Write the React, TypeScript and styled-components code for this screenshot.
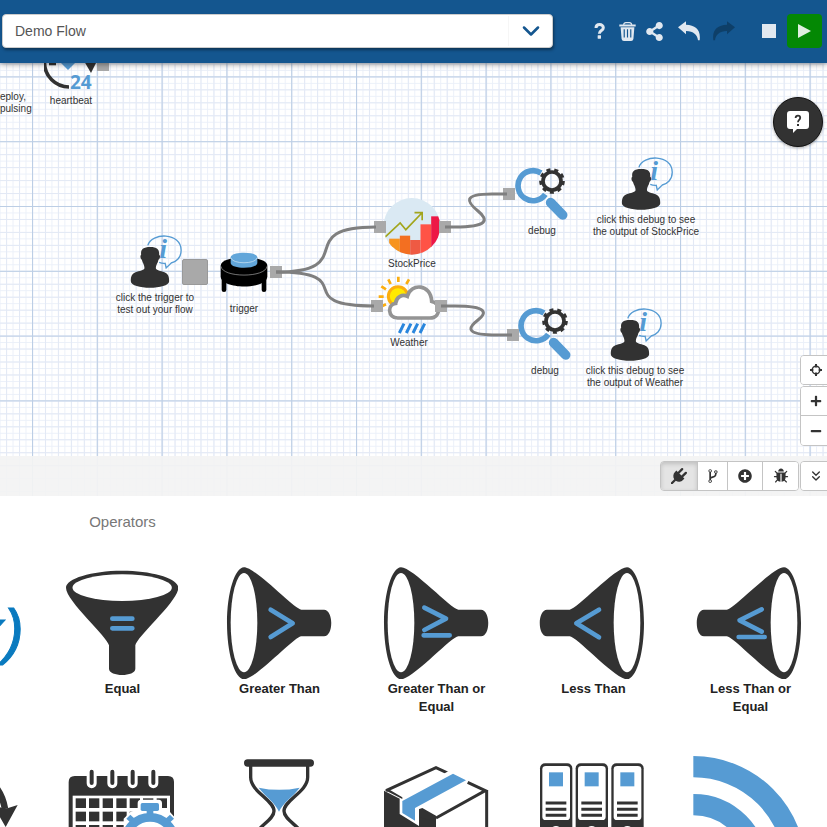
import React from "react";
import styled, { createGlobalStyle, css } from "styled-components";
import { FaShareAlt, FaPlusCircle, FaPlus, FaMinus } from "react-icons/fa";
import { ChevronDown, ChevronsDown } from "lucide-react";

const INK = "#323232";
const BLUE = "#569bd3";

const GlobalStyle = createGlobalStyle`
  * { box-sizing: border-box; }
  body {
    margin: 0;
    background: #fff;
    color: #333;
    font-family: "Liberation Sans", Arial, sans-serif;
    font-size: 14px;
  }
  button, select { font-family: inherit; }
`;

const Page = styled.div`
  display: flex;
  flex-direction: column;
  height: 100vh;
  overflow: hidden;
`;

/* ---------- header ---------- */

const Header = styled.header`
  position: relative;
  z-index: 2;
  display: flex;
  align-items: center;
  flex: none;
  padding: 14px 5px 15px 2px;
  background: #14568f;
  box-shadow: 0 1px 6px rgba(0, 0, 0, 0.45);
`;

const FlowPicker = styled.label`
  position: relative;
  display: flex;
  align-items: center;
  flex: 1;
  margin-right: 33px;
`;

const FlowSelect = styled.select`
  appearance: none;
  width: 100%;
  height: 34px;
  padding: 0 48px 0 12px;
  border: 1px solid #ccc;
  border-radius: 4px;
  background: #fff;
  box-shadow: 1px 2px 3px rgba(0, 0, 0, 0.4);
  color: #555;
  font-size: 14px;
`;

const PickerArrow = styled.span`
  position: absolute;
  right: 1px;
  display: flex;
  align-items: center;
  justify-content: center;
  width: 44px;
  height: 30px;
  border-left: 1px solid #f6f6f6;
  color: #14568f;
  pointer-events: none;
`;

const Actions = styled.div`
  display: flex;
  align-items: center;
`;

const ActionButton = styled.button<{ $width?: number }>`
  display: flex;
  align-items: center;
  justify-content: center;
  width: ${(p) => p.$width ?? 28}px;
  height: 34px;
  padding: 0;
  border: 0;
  background: none;
  color: #e1e8f0;
  &:disabled { color: #0e3f68; }
`;

const RunGroup = styled.div`
  display: flex;
  gap: 4px;
  margin-left: 17px;
`;

const PlayButton = styled(ActionButton)`
  width: 35px;
  border-radius: 4px;
  background: #048804;
  color: #dff0df;
`;

/* ---------- flow canvas ---------- */

const Canvas = styled.main`
  position: relative;
  flex: 433 1 0;
  min-height: 0;
  overflow: hidden;
`;

const Layer = styled.svg`
  position: absolute;
  inset: 0;
  width: 100%;
  height: 100%;
  pointer-events: none;
`;

const NodeBox = styled.div<{ $x: number; $y: number }>`
  position: absolute;
  left: ${(p) => p.$x}px;
  top: ${(p) => p.$y}px;
  display: flex;
  flex-direction: column;
  align-items: center;
  gap: 3px;
  transform: translateX(-50%);
  color: #333;
  font-size: 10px;
  line-height: 12px;
  text-align: center;
  white-space: pre;
  svg { display: block; }
`;

const EdgeNote = styled.div`
  position: absolute;
  left: 0;
  top: 28px;
  font-size: 10px;
  line-height: 12px;
  white-space: pre;
`;

const InjectButton = styled.button`
  position: absolute;
  left: 182px;
  top: 196px;
  width: 26px;
  height: 26px;
  border: 1px solid #999;
  border-radius: 2px;
  background: #a9a9a9;
`;

const HelpBubble = styled.button`
  position: absolute;
  top: 34px;
  right: 4px;
  display: flex;
  align-items: center;
  justify-content: center;
  width: 50px;
  height: 50px;
  padding: 0;
  border: 1px solid #111;
  border-radius: 50%;
  background: #323232;
  box-shadow: 0 1px 3px rgba(0, 0, 0, 0.35);
`;

const ZoomTools = styled.div`
  position: absolute;
  right: -5px;
  bottom: 50px;
  display: flex;
  flex-direction: column;
  gap: 1px;
`;

const ButtonGroup = styled.div<{ $column?: boolean }>`
  display: flex;
  flex-direction: ${(p) => (p.$column ? "column" : "row")};
  border: 1px solid #c4c4c4;
  border-radius: 4px;
  background: #fff;
  overflow: hidden;
`;

const ToolButton = styled.button<{ $width?: number; $active?: boolean; $rule?: "top" | "left" }>`
  display: flex;
  align-items: center;
  justify-content: center;
  width: ${(p) => p.$width ?? 30}px;
  height: 28px;
  padding: 0;
  border: 0;
  background: #fff;
  color: #333;
  ${(p) => p.$rule === "top" && css`border-top: 1px solid #c4c4c4; height: 30px;`}
  ${(p) => p.$rule === "left" && css`border-left: 1px solid #c4c4c4;`}
  ${(p) => p.$active && css`background: #e4e4e4; box-shadow: inset 0 2px 4px rgba(0, 0, 0, 0.16);`}
`;

const TabBar = styled.nav`
  position: absolute;
  left: 0;
  right: -5px;
  bottom: 0;
  display: flex;
  justify-content: flex-end;
  gap: 1px;
  padding: 5px 0;
  background: rgba(243, 243, 243, 0.93);
`;

/* ---------- palette ---------- */

const Palette = styled.section`
  flex: 331 1 0;
  min-height: 0;
  overflow: hidden;
  background: #fff;
`;

const PaletteTrack = styled.div`
  display: flex;
  margin-left: -113px;
`;

const Group = styled.div`
  flex: none;
  padding-top: 17px;
`;

const GroupTitle = styled.h2`
  width: 157px;
  min-height: 18px;
  margin: 0 0 36px;
  color: #777;
  font-size: 15px;
  font-weight: 400;
  line-height: 18px;
  text-align: center;
`;

const Tiles = styled.div<{ $columns: number }>`
  display: grid;
  grid-template-columns: repeat(${(p) => p.$columns}, 157px);
  row-gap: 40px;
`;

const Tile = styled.button`
  display: flex;
  flex-direction: column;
  align-items: center;
  padding: 0 22px;
  border: 0;
  background: none;
  color: #222;
  font-size: 13px;
  font-weight: 700;
  line-height: 18px;
`;

const TileArt = styled.svg`
  display: block;
  width: 112px;
  height: 112px;
  margin: 0 1px 1px 0;
`;

const TileLabel = styled.span`
  min-height: 35px;
`;

/* ---------- header icons ---------- */

const HelpIcon = () => (
  <svg width="12" height="16" viewBox="278 71 36 48">
    <path d="M284 86 C284 72 306 73 306 85 C306 94 294 93 294 103" fill="none" stroke="currentColor" strokeWidth="9" />
    <rect x="289" y="108" width="10" height="10" rx="1" fill="currentColor" />
  </svg>
);

const TrashIcon = () => (
  <svg width="17" height="19" viewBox="351 65 50 58">
    <path d="M364 74 Q365 67 371 67 H382 Q388 67 389 74" fill="none" stroke="currentColor" strokeWidth="3.5" />
    <path d="M351 73 H401 V79 H351Z M355 81 H397 L394 117 Q393 123 387 123 H365 Q359 123 358 117Z" fill="currentColor" />
    <path d="M366 87 V112 M376 87 V112 M386 87 V112" stroke="#14568f" strokeWidth="3.5" />
  </svg>
);

const ArrowIcon = ({ flip }: { flip?: boolean }) => (
  <svg width="22" height="20" viewBox="531 64 66 60">
    <path
      transform={flip ? "translate(1128 0) scale(-1 1)" : undefined}
      d="M531 83 L555 65 V75 C584 76 600 90 596 122 H591 C589 105 578 95 555 94 V104Z"
      fill="currentColor"
    />
  </svg>
);

const HelpBubbleIcon = () => (
  <svg width="22" height="22" viewBox="0 0 22 22">
    <path d="M3 0 H19 Q22 0 22 3 V15 Q22 18 19 18 H10 L6 22 V18 H3 Q0 18 0 15 V3 Q0 0 3 0Z" fill="#fff" />
    <path d="M8.6 7 C8.8 3.8 13.2 4 13.2 6.8 C13.2 9 11 8.8 11 11.2" fill="none" stroke={INK} strokeWidth="1.8" />
    <rect x="10" y="13" width="2" height="2" fill={INK} />
  </svg>
);

/* ---------- tool icons ---------- */

const GLYPHS = {
  plug: "M1755 453q37 38 37 90.5t-37 90.5l-401 400 150 150-160 160q-163 163-389.5 186.5t-411.5-100.5l-362 362h-181v-181l362-362q-124-185-100.5-411.5t186.5-389.5l160-160 150 150 400-401q38-37 91-37t90 37 37 90.5-37 90.5l-400 401 234 234 401-400q38-37 91-37t90 37z",
  fork: "M672 1472q0-40-28-68t-68-28-68 28-28 68 28 68 68 28 68-28 28-68zm0-1152q0-40-28-68t-68-28-68 28-28 68 28 68 68 28 68-28 28-68zm640 128q0-40-28-68t-68-28-68 28-28 68 28 68 68 28 68-28 28-68zm96 0q0 52-26 96.5t-70 69.5q-2 287-226 414-67 38-203 81-128 40-169.5 71t-41.5 100v26q44 25 70 69.5t26 96.5q0 80-56 136t-136 56-136-56-56-136q0-52 26-96.5t70-69.5v-820q-44-25-70-69.5t-26-96.5q0-80 56-136t136-56 136 56 56 136q0 52-26 96.5t-70 69.5v497q54-26 154-57 55-17 87.5-29.5t70.5-31 59-39.5 40.5-51 28-69.5 8.5-91.5q-44-25-70-69.5t-26-96.5q0-80 56-136t136-56 136 56 56 136z",
  bug: "M1696 960q0 26-19 45t-45 19h-224q0 171-67 290l208 209q19 19 19 45t-19 45q-18 19-45 19t-45-19l-198-197q-5 5-15 13t-42 28.5-65 36.5-82 29-97 13v-896h-128v896q-51 0-101.5-13.5t-87-33-66-39-43.5-32.5l-15-14-183 207q-20 21-48 21-24 0-43-16-19-18-20.5-44.5t15.5-46.5l202-227q-58-114-58-274h-224q-26 0-45-19t-19-45 19-45 45-19h224v-294l-173-173q-19-19-19-45t19-45 45-19 45 19l173 173h844l173-173q19-19 45-19t45 19 19 45-19 45l-173 173v294h224q26 0 45 19t19 45zm-480-576h-640q0-133 93.5-226.5t226.5-93.5 226.5 93.5 93.5 226.5z",
};

const Glyph = ({ name }: { name: keyof typeof GLYPHS }) => (
  <svg width="16" height="16" viewBox="0 0 1792 1792" fill="currentColor">
    <path d={GLYPHS[name]} />
  </svg>
);

const CenterIcon = () => (
  <svg width="12" height="12" viewBox="0 0 12 12">
    <circle cx="6" cy="6" r="3.8" fill="none" stroke="currentColor" strokeWidth="1.4" />
    <path d="M6 0 V3.4 M6 8.6 V12 M0 6 H3.4 M8.6 6 H12" stroke="currentColor" strokeWidth="2" />
  </svg>
);

/* ---------- node art ---------- */

const PersonArt = () => (
  <svg width="51" height="55" viewBox="87 41 153 165" overflow="visible">
    <path d="M141 75 C152 36 241 35 241 90 C241 112 226 125 211 128 L196 143 L193 129 Q184 130 175 126" fill="none" stroke={BLUE} strokeWidth="4" />
    <text x="175" y="114" fill={BLUE} fontFamily="Liberation Serif, serif" fontSize="84" fontStyle="italic" fontWeight="700">i</text>
    <path
      d="M148 80 C170 80 176 88 175 103 C180 106 177 116 173 118 C171 129 165 133 165 143 C166 151 179 151 191 156 C203 161 205 170 205 183 C205 209 90 209 90 183 C90 170 92 161 104 156 C116 151 130 151 131 143 C131 133 126 129 123 118 C119 116 117 106 121 103 C119 88 126 80 148 80Z"
      fill={INK}
    />
  </svg>
);

const TriggerArt = () => (
  <svg width="48" height="48" viewBox="361 96 144 144">
    <path d="M366 170 H380 V210 Q380 216 373 216 T366 210Z M486 170 H500 V210 Q500 216 493 216 T486 210Z" />
    <path d="M363 137 C363 103 503 103 503 137 V169 C503 210 363 210 363 169Z" />
    <path d="M364 139 C368 174 498 174 502 139" fill="none" stroke="#aaa" strokeWidth="2" />
    <path d="M393 112 C393 94 473 94 473 112 V129 C473 148 393 148 393 129Z" fill="#62a6da" />
    <path d="M394 114 C398 133 468 133 472 114" fill="none" stroke="#d6e8f5" strokeWidth="2" />
  </svg>
);

const StockArt = () => (
  <svg width="57" height="57" viewBox="223 55 171 171">
    <clipPath id="stock-disc"><circle cx="308" cy="140" r="85" /></clipPath>
    <g clipPath="url(#stock-disc)">
      <rect x="223" y="55" width="171" height="171" fill="#dae9f3" />
      <rect x="240" y="177" width="32" height="49" fill="#f7941e" />
      <rect x="272" y="168" width="31" height="58" fill="#f36f21" />
      <rect x="303" y="181" width="31" height="45" fill="#ef5a43" />
      <rect x="334" y="134" width="32" height="92" fill="#ff5346" />
      <rect x="366" y="110" width="28" height="116" fill="#ed1846" />
      <path d="M226 174 L273 130 L290 150 L338 100 M316 99 H339 V122" fill="none" stroke="#a2a51c" strokeWidth="5" />
    </g>
  </svg>
);

const WeatherArt = () => (
  <svg width="62" height="58" viewBox="204 290 186 174">
    <path d="M265 292 V308 M235 300 L242 314 M297 300 L289 314 M214 321 L228 330 M206 352 H221 M217 380 L228 375" stroke="#fbae10" strokeWidth="8" />
    <circle cx="264" cy="351" r="29" fill="#ffea00" stroke="#fbae10" strokeWidth="9" />
    <path d="M263 416 C233 416 231 375 257 372 C258 354 276 343 292 351 C302 311 362 312 365 366 C393 372 393 416 360 416Z" fill="#fff" stroke="#949494" strokeWidth="11" />
    <path d="M282 433 L268 461 M303 433 L289 461 M323 433 L309 461 M344 433 L330 461" stroke="#2a86dd" strokeWidth="9" />
  </svg>
);

const DebugArt = () => (
  <svg width="54" height="55" viewBox="105 81 162 165">
    <path d="M183 99 A45 45 0 1 0 196 163" fill="none" stroke={BLUE} strokeWidth="17" />
    <path d="M212 188 L248 225" stroke={BLUE} strokeWidth="29" strokeLinecap="round" />
    <circle cx="216" cy="123" r="27" fill="none" stroke={INK} strokeWidth="11" />
    <circle cx="216" cy="123" r="34" fill="none" stroke={INK} strokeWidth="9" strokeDasharray="12 11.73" />
  </svg>
);

const HeartbeatArt = () => (
  <svg width="54" height="69" viewBox="44 23 54 69">
    <path d="M69 87 A24 24 0 0 1 69 38 A24 24 0 0 1 91 62" fill="none" stroke={INK} strokeWidth="3.6" />
    <path d="M49 64 H56" stroke={INK} strokeWidth="2.6" />
    <path d="M55 57 L68 70 L81 57 Q68 46 55 57Z" fill={BLUE} />
    <path d="M84 61 H97 L91 73Z" fill={INK} />
    <text x="70" y="89" fill={BLUE} fontFamily="Open Sans, sans-serif" fontSize="19" fontWeight="700">24</text>
  </svg>
);

/* ---------- wires ---------- */

const WIRES = [
  "M276 209 C362 209 290 164 376 164",
  "M276 209 C362 209 288 243 374 243",
  "M445 164 H455 C488 164 489 157 478 148 S462 131 492 131 H507",
  "M441 243 H455 C488 243 487 250 478 257 S464 271 492 272 H512",
];

const PORTS = [
  [103, 2], [276, 209], [380, 164], [445, 164], [377, 243], [441, 243], [509, 131], [513, 272],
];

const GridLayer = () => (
  <Layer aria-hidden="true">
    <defs>
      <pattern id="grid-fine" width="6.48" height="6.48" patternUnits="userSpaceOnUse" x="32" y="13.4">
        <path d="M0 0.5 H6.48 M0.5 0 V6.48" stroke="#ebf0f9" />
      </pattern>
      <pattern id="grid-mid" width="12.96" height="12.96" patternUnits="userSpaceOnUse" x="32" y="13.4">
        <path d="M0 0.5 H12.96 M0.5 0 V12.96" stroke="#e3e9f5" />
      </pattern>
      <pattern id="grid-major" width="64.8" height="64.8" patternUnits="userSpaceOnUse" x="32" y="13.4">
        <path d="M0 0.5 H64.8 M0.5 0 V64.8" stroke="#bccee5" strokeWidth="1.2" />
      </pattern>
    </defs>
    <rect width="100%" height="100%" fill="url(#grid-fine)" />
    <rect width="100%" height="100%" fill="url(#grid-mid)" />
    <rect width="100%" height="100%" fill="url(#grid-major)" />
  </Layer>
);

const WireLayer = () => (
  <Layer aria-hidden="true">
    {PORTS.map(([x, y]) => (
      <rect key={`${x}-${y}`} x={x - 6} y={y - 6} width="12" height="12" fill="#a9a9a9" />
    ))}
    {WIRES.map((d) => (
      <path key={d} d={d} fill="none" stroke="#7f7f7f" strokeWidth="3" />
    ))}
  </Layer>
);

const NODES = [
  { x: 71, y: -40, art: <HeartbeatArt />, label: "heartbeat" },
  { x: 155, y: 171, art: <PersonArt />, label: "click the trigger to\ntest out your flow" },
  { x: 244, y: 189, art: <TriggerArt />, label: "trigger" },
  { x: 412, y: 135, art: <StockArt />, label: "StockPrice" },
  { x: 409, y: 213, art: <WeatherArt />, label: "Weather" },
  { x: 542, y: 104, art: <DebugArt />, label: "debug" },
  { x: 545, y: 244, art: <DebugArt />, label: "debug" },
  { x: 646, y: 93, art: <PersonArt />, label: "click this debug to see\nthe output of StockPrice" },
  { x: 635, y: 244, art: <PersonArt />, label: "click this debug to see\nthe output of Weather" },
];

/* ---------- palette art ---------- */

const FunctionArt = () => (
  <TileArt viewBox="0 0 112 112" overflow="visible">
    <text x="115" y="85" textAnchor="end" fill="#0a7abf" stroke="#0a7abf" strokeWidth="1" fontFamily="Liberation Sans, sans-serif" fontSize="62" fontStyle="italic" fontWeight="400">f(x)</text>
  </TileArt>
);

const EqualArt = () => (
  <TileArt viewBox="199 200 336 336">
    <path d="M199 262 C199 235 275 211 367 211 C460 211 536 235 536 262 C536 302 412 408 407 435 V505 C407 530 328 530 328 505 V435 C323 408 199 302 199 262Z" fill={INK} />
    <ellipse cx="367.5" cy="262" rx="149" ry="40" fill="#fff" />
    <path d="M338 355 H398 M338 384 H398" stroke={BLUE} strokeWidth="14" strokeLinecap="round" />
  </TileArt>
);

const ConeArt = ({ sign, flip }: { sign: string; flip?: boolean }) => (
  <TileArt viewBox="670 200 336 336">
    <g transform={flip ? "translate(1673 0) scale(-1 1)" : undefined}>
      <path d="M733 201 C768 201 885 328 905 328 H973 C1002 328 1002 408 973 408 H905 C885 408 768 537 733 537 C706 537 682 462 682 369 C682 276 706 201 733 201Z" fill={INK} />
      <ellipse cx="733" cy="367" rx="40" ry="149" fill="#fff" />
      <path d={sign} fill="none" stroke={BLUE} strokeWidth="14" strokeLinecap="round" strokeLinejoin="round" />
    </g>
  </TileArt>
);

const CycleArt = () => (
  <TileArt viewBox="-270 48 336 336">
    <path d="M-110 92 Q0 110 18 210" fill="none" stroke={INK} strokeWidth="20" />
    <path d="M-18 198 L18 210 L56 198 L20 264Z" fill={INK} />
  </TileArt>
);

const CalendarArt = () => (
  <TileArt viewBox="200 48 336 336">
    <path d="M208 384 V126 Q208 108 226 108 H506 Q524 108 524 126 V384Z" fill={INK} />
    <rect x="220" y="167" width="292" height="217" fill="#fff" />
    <path d="M277 100 V130 M339 100 V130 M400 100 V130 M462 100 V130" stroke="#fff" strokeWidth="30" strokeLinecap="round" />
    <path d="M277 95 V129 M339 95 V129 M400 95 V129 M462 95 V129" stroke={INK} strokeWidth="12" strokeLinecap="round" />
    {[175, 215, 255, 295].map((y) =>
      [229, 269, 310, 351, 391, 431, 472].map((x) => (
        <rect key={`${x}-${y}`} x={x} y={y} width="31" height="29" fill={INK} />
      ))
    )}
    <path d="M373 236 L393 216 L415 208 V190 Q415 179 425 179 H478 Q488 179 488 190 V208 L512 216 L530 236 V384 H373Z" fill="#fff" />
    <rect x="424" y="189" width="55" height="24" rx="5" fill={BLUE} />
    <path d="M442 210 H462 V225 H442Z M381 236 L393 224 L408 238 L396 250Z M524 236 L512 224 L497 238 L509 250Z" fill={BLUE} />
    <circle cx="452" cy="306" r="74" fill="#fff" stroke={BLUE} strokeWidth="26" />
  </TileArt>
);

const HourglassArt = () => (
  <TileArt viewBox="670 48 336 336">
    <path d="M753 75 V112 C753 155 823 180 823 213 C823 246 753 265 753 320 V360 M924 75 V112 C924 155 853 180 853 213 C853 246 924 265 924 320 V360" fill="none" stroke={INK} strokeWidth="10" />
    <path d="M744 69 H932 M744 364 H932" stroke={INK} strokeWidth="22" strokeLinecap="round" />
    <path d="M777 143 Q838 156 900 143 C880 171 850 187 838 215 C826 187 798 171 777 143Z" fill={BLUE} />
  </TileArt>
);

const PackageArt = () => (
  <TileArt viewBox="30 48 336 336">
    <path d="M42 152 L198 232 V384 L42 320Z" fill={INK} />
    <path d="M60 150 L198 82 L344 152 L198 234 L148 207 L140 200 L95 172Z" fill="#fff" />
    <path d="M48 152 L198 83 L235 100 M293 127 L346 152 L198 234 M350 150 V330 L198 384" fill="none" stroke={INK} strokeWidth="9" />
    <path d="M89 176 L240 91 L300 120 L147 207 V258 L89 222Z" fill="#fff" />
    <path d="M97 183 L249 101 L288 121 L135 204 V242 L97 219Z" fill={BLUE} />
    <path d="M60 150 L97 172 V177 L44 150Z M148 207 L157 204 L198 227 V245 L148 232Z" fill={INK} />
  </TileArt>
);

const BindersArt = () => (
  <TileArt viewBox="503 48 336 336">
    {[0, 107, 214].map((dx) => (
      <g key={dx} transform={`translate(${dx} 0)`}>
        <rect x="512" y="70" width="97" height="310" rx="15" fill={INK} />
        <path d="M519 88 Q519 78 530 78 H591 Q602 78 602 88 V230 Q602 240 592 240 H529 Q519 240 519 230Z" fill="#fff" />
        <rect x="539" y="97" width="42" height="42" fill={BLUE} />
        <path d="M529 189 H591 M529 208 H591 M529 226 H591" stroke={INK} strokeWidth="9" />
        <circle cx="560" cy="276" r="18" fill="#fff" />
      </g>
    ))}
  </TileArt>
);

const FeedArt = () => (
  <TileArt viewBox="972 48 336 336" overflow="visible">
    <path d="M970 80 A306 306 0 0 1 1276 386 M970 194 A192 192 0 0 1 1162 386" fill="none" stroke={BLUE} strokeWidth="64" />
  </TileArt>
);

const OPERATORS = [
  { name: "Equal", label: "Equal", art: <EqualArt /> },
  { name: "Greater Than", label: "Greater Than", art: <ConeArt sign="M813 328 L879 369 L813 410" /> },
  { name: "Greater Than or Equal", label: "Greater Than or Equal", art: <ConeArt sign="M803 322 L868 355 L803 389 M801 405 H879" /> },
  { name: "Less Than", label: "Less Than", art: <ConeArt flip sign="M817 328 L885 369 L817 411" /> },
  { name: "Less Than or Equal", label: "Less Than or Equal", art: <ConeArt flip sign="M800 327 L866 360 L800 394 M791 410 H869" /> },
  { name: "Schedule", label: "", art: <CalendarArt /> },
  { name: "Delay", label: "", art: <HourglassArt /> },
  { name: "Package", label: "", art: <PackageArt /> },
  { name: "Library", label: "", art: <BindersArt /> },
  { name: "Feed", label: "", art: <FeedArt /> },
];

export default function App() {
  return (
    <Page>
      <GlobalStyle />
      <Header>
        <FlowPicker>
          <FlowSelect aria-label="Flow" defaultValue="demo">
            <option value="demo">Demo Flow</option>
          </FlowSelect>
          <PickerArrow><ChevronDown size={28} strokeWidth={2.2} /></PickerArrow>
        </FlowPicker>
        <Actions>
          <ActionButton aria-label="Help"><HelpIcon /></ActionButton>
          <ActionButton aria-label="Delete" $width={26}><TrashIcon /></ActionButton>
          <ActionButton aria-label="Share"><FaShareAlt size={19} /></ActionButton>
          <ActionButton aria-label="Undo" $width={42}><ArrowIcon /></ActionButton>
          <ActionButton aria-label="Redo" disabled><ArrowIcon flip /></ActionButton>
          <RunGroup>
            <ActionButton aria-label="Stop">
              <svg width="14" height="14"><rect width="14" height="14" fill="currentColor" /></svg>
            </ActionButton>
            <PlayButton aria-label="Run">
              <svg width="13" height="14"><path d="M0 0 L13 7 L0 14Z" fill="currentColor" /></svg>
            </PlayButton>
          </RunGroup>
        </Actions>
      </Header>

      <Canvas>
        <GridLayer />
        <EdgeNote>{"eploy,\npulsing"}</EdgeNote>
        {NODES.map((n) => (
          <NodeBox key={`${n.x}-${n.y}`} $x={n.x} $y={n.y}>
            {n.art}
            <span>{n.label}</span>
          </NodeBox>
        ))}
        <InjectButton aria-label="Fire trigger" />
        <WireLayer />
        <HelpBubble aria-label="Ask for help"><HelpBubbleIcon /></HelpBubble>
        <ZoomTools>
          <ButtonGroup>
            <ToolButton aria-label="Center"><CenterIcon /></ToolButton>
          </ButtonGroup>
          <ButtonGroup $column>
            <ToolButton aria-label="Zoom in"><FaPlus size={12} /></ToolButton>
            <ToolButton aria-label="Zoom out" $rule="top"><FaMinus size={12} /></ToolButton>
          </ButtonGroup>
        </ZoomTools>
        <TabBar>
          <ButtonGroup>
            <ToolButton aria-label="Nodes" $width={36} $active><Glyph name="plug" /></ToolButton>
            <ToolButton aria-label="Branches" $width={30} $rule="left"><Glyph name="fork" /></ToolButton>
            <ToolButton aria-label="Add" $width={35} $rule="left"><FaPlusCircle size={14} /></ToolButton>
            <ToolButton aria-label="Debug" $width={36} $rule="left"><Glyph name="bug" /></ToolButton>
          </ButtonGroup>
          <ButtonGroup>
            <ToolButton aria-label="Collapse"><ChevronsDown size={16} /></ToolButton>
          </ButtonGroup>
        </TabBar>
      </Canvas>

      <Palette>
        <PaletteTrack>
          <Group>
            <GroupTitle />
            <Tiles $columns={1}>
              <Tile aria-label="Function"><FunctionArt /><TileLabel /></Tile>
              <Tile aria-label="Cycle"><CycleArt /><TileLabel /></Tile>
            </Tiles>
          </Group>
          <Group>
            <GroupTitle>Operators</GroupTitle>
            <Tiles $columns={5}>
              {OPERATORS.map((o) => (
                <Tile key={o.name} aria-label={o.name}>
                  {o.art}
                  <TileLabel>{o.label}</TileLabel>
                </Tile>
              ))}
            </Tiles>
          </Group>
        </PaletteTrack>
      </Palette>
    </Page>
  );
}
